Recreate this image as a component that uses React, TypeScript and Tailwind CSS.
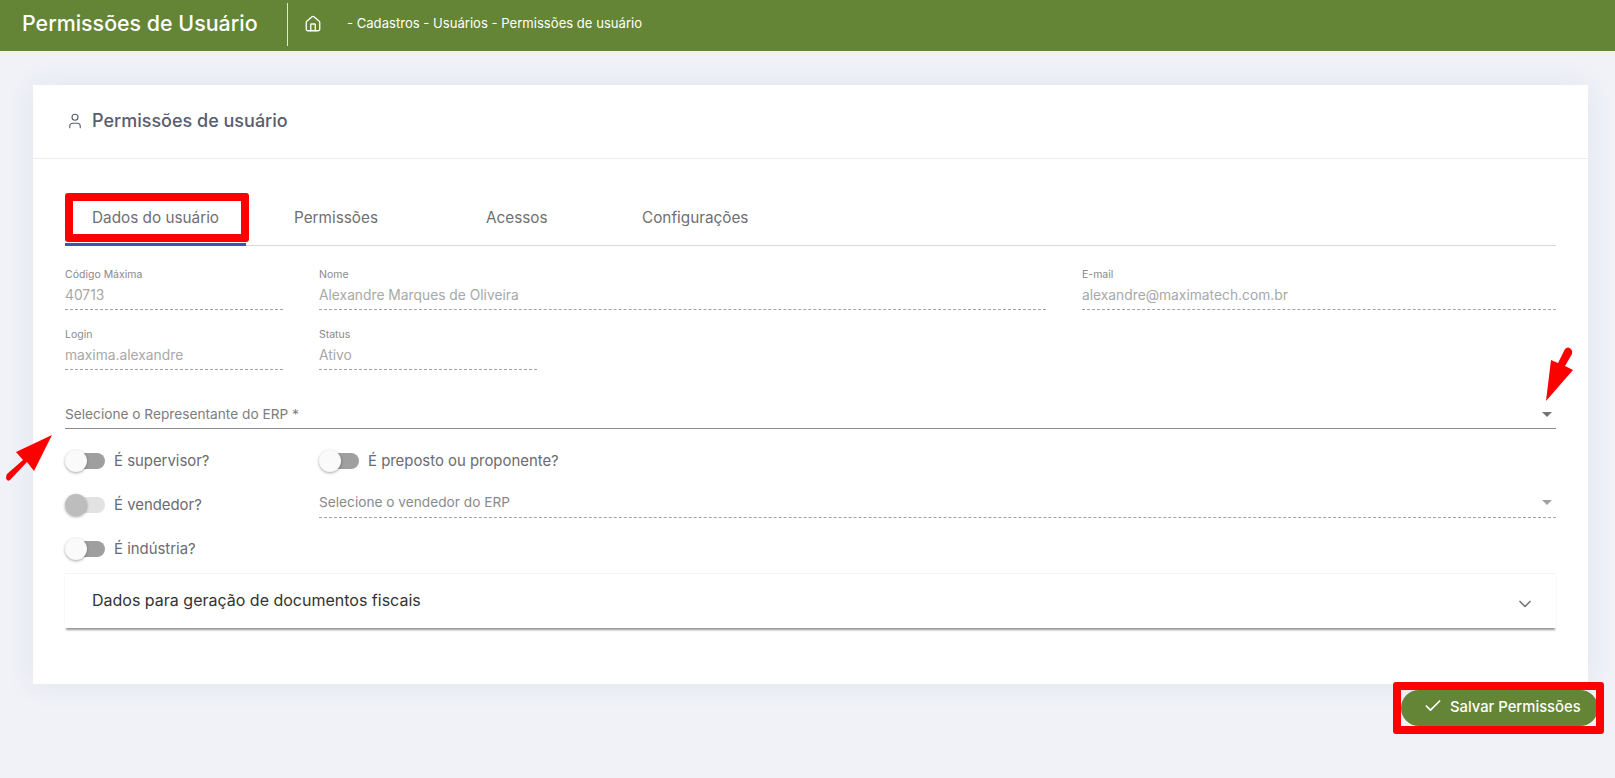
import { Check, ChevronDown, Home, User } from "lucide-react";

const font = "font-['Inter','Noto_Sans',sans-serif]";

const ReadField = ({ label, value, width }: { label: string; value: string; width: string }) => (
  <div className={`${width} h-[42px] border-b border-dashed border-[#a3a3a3]`}>
    <div className="text-[10.5px] leading-[14px] text-[#8a8a8a]">{label}</div>
    <div className="mt-[3px] text-[13.8px] leading-[20px] text-[#a8a8a8]">{value}</div>
  </div>
);

const Toggle = ({ label, disabled }: { label: string; disabled?: boolean }) => (
  <div className="flex items-center gap-[9px]">
    <div className="relative h-[16px] w-[40px]">
      <div className={`ml-[8px] h-full w-[32px] rounded-full ${disabled ? "bg-[#e2e2e2]" : "bg-[#9f9f9f]"}`} />
      <div
        className={`absolute left-0 top-[-3px] h-[22px] w-[22px] rounded-full shadow-[0_1px_3px_rgba(0,0,0,0.35)] ${
          disabled ? "bg-[#bdbdbd]" : "bg-[#fafafa]"
        }`}
      />
    </div>
    <span className="text-[14.9px] leading-[20px] text-[#6b6b72]">{label}</span>
  </div>
);

const Caret = ({ color }: { color: string }) => (
  <div className={`h-0 w-0 border-x-[5px] border-t-[5px] border-x-transparent ${color}`} />
);

const tabs = [
  { name: "Dados do usuário", width: "w-[181px]", pl: "pl-[27px]", active: true },
  { name: "Permissões", width: "w-[240px]", pl: "pl-[48px]" },
  { name: "Acessos", width: "w-[156px]", pl: "pl-[0px]" },
  { name: "Configurações", width: "w-[200px]", pl: "pl-[0px]" },
];

export default function App() {
  return (
    <div className={`relative h-[778px] w-[1615px] overflow-hidden bg-[#f0f2f8] ${font}`}>
      <header className="flex h-[51px] items-center bg-[#648535] pb-[3px] pl-[22px] text-white">
        <h1 className="w-[265px] text-[21.4px] font-medium leading-none">Permissões de Usuário</h1>
        <div className="h-[43px] w-px bg-white/80" />
        <Home className="ml-[16px] h-[18px] w-[18px]" strokeWidth={1.75} />
        <span className="ml-[25px] text-[13.1px]">- Cadastros - Usuários - Permissões de usuário</span>
      </header>

      <main className="px-[33px] pt-[34px]">
        <section className="h-[599px] w-[1555px] bg-white shadow-[0_0_28px_rgba(82,63,105,0.08)]">
          <div className="flex h-[74px] items-center border-b border-[#ebedf2] pb-[2px] pl-[33px]">
            <User className="h-[18px] w-[18px] text-[#595d6e]" strokeWidth={1.5} />
            <h2 className="ml-[8px] text-[18px] font-medium leading-none text-[#595d6e]">Permissões de usuário</h2>
          </div>

          <div className="px-[32px]">
            <div className="mt-[34px] flex h-[53px] border-b border-[#d8d8d8]">
              {tabs.map((t) => (
                <div
                  key={t.name}
                  className={`${t.width} ${t.pl} h-[53px] pt-[15px] text-[15.3px] leading-[20px] text-[#6f6f6f] ${
                    t.active ? "border-b-[3px] border-[#3f51b5]" : ""
                  }`}
                >
                  {t.name}
                </div>
              ))}
            </div>

            <div className="mt-[22px] flex gap-[36px]">
              <ReadField label="Código Máxima" value="40713" width="w-[218px]" />
              <ReadField label="Nome" value="Alexandre Marques de Oliveira" width="w-[727px]" />
              <ReadField label="E-mail" value="alexandre@maximatech.com.br" width="w-[474px]" />
            </div>
            <div className="mt-[18px] flex gap-[36px]">
              <ReadField label="Login" value="maxima.alexandre" width="w-[218px]" />
              <ReadField label="Status" value="Ativo" width="w-[218px]" />
            </div>

            <div className="mt-[34px] flex h-[25px] items-start justify-between border-b border-[#8c8c8c] pr-[4px]">
              <span className="text-[13.7px] leading-[20px] text-[#7d7d7d]">Selecione o Representante do ERP *</span>
              <div className="pt-[8px]">
                <Caret color="border-t-[#757575]" />
              </div>
            </div>

            <div className="mt-[22px] flex gap-[46px]">
              <div className="flex w-[208px] flex-col gap-[24px]">
                <Toggle label="É supervisor?" />
                <Toggle label="É vendedor?" disabled />
                <Toggle label="É indústria?" />
              </div>
              <div className="flex-1">
                <Toggle label="É preposto ou proponente?" />
                <div className="mt-[21px] flex h-[26px] items-start justify-between border-b border-dashed border-[#a3a3a3] pl-0 pr-[4px]">
                  <span className="text-[13.7px] leading-[20px] text-[#8a8a8a]">Selecione o vendedor do ERP</span>
                  <div className="pt-[8px]">
                    <Caret color="border-t-[#a0a0a0]" />
                  </div>
                </div>
              </div>
            </div>

            <div className="mt-[14px] flex h-[55px] items-center justify-between border-t border-[#f4f4f4] pb-[3px] pl-[27px] pr-[21px] shadow-[0_3px_2px_-1px_rgba(0,0,0,0.42)]">
              <span className="text-[16px] leading-none text-[#333333]">Dados para geração de documentos fiscais</span>
              <ChevronDown className="mt-[8px] h-[20px] w-[20px] text-[#757575]" strokeWidth={2} />
            </div>
          </div>
        </section>

        <div className="mt-[6px] flex justify-end">
          <button className="mr-[-16px] flex h-[36px] w-[197px] items-center rounded-full bg-[#648535] pb-[2px] pl-[22px] text-[14.8px] font-medium text-white">
            <Check className="mb-[2px] h-[20px] w-[20px]" strokeWidth={2} />
            <span className="ml-[7px]">Salvar Permissões</span>
          </button>
        </div>
      </main>

      {/* marcações em vermelho por cima da tela */}
      <div className="absolute left-[65px] top-[193px] h-[49px] w-[184px] rounded-[3px] border-8 border-[#ff0000]" />
      <div className="absolute left-[1393px] top-[682px] h-[52px] w-[211px] rounded-[3px] border-8 border-[#ff0000]" />
      <svg className="absolute left-0 top-0 h-[778px] w-[1615px]" viewBox="0 0 1615 778" fill="#ff0000">
        <path d="M52 435 L34 471 L27 462 L10 480 Q7 482 6 478 Q6 476 7 474 L23 460 L16 452 Z" />
        <path d="M1546 401 L1551 360 L1558 363 L1565 349 Q1568 346 1571 349 Q1573 351 1572 354 L1565 366 L1573 370 Z" />
      </svg>
    </div>
  );
}
